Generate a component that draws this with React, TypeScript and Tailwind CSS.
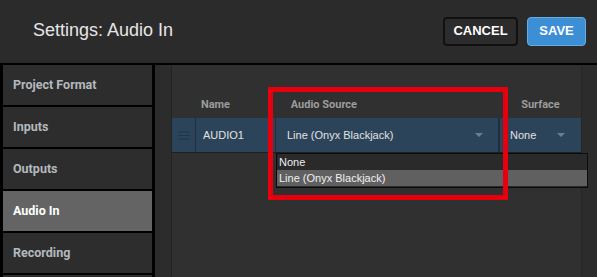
import React from 'react';

const navItems = ['Project Format', 'Inputs', 'Outputs', 'Audio In', 'Recording', ''];

export default function App() {
  return (
    <div className="relative w-[597px] h-[277px] overflow-hidden bg-black font-['Roboto',sans-serif]">
      {/* header */}
      <div className="h-[63px] bg-[#2b2b2b] flex items-center justify-between pl-[33px] pr-[11px]">
        <h1 className="text-[18px] text-[#e6e6e6] font-['Liberation_Sans',Arial,sans-serif] mt-[-2px]">
          Settings: Audio In
        </h1>
        <div className="flex gap-[9px] mt-[-1px]">
          <button className="w-[75px] h-[29px] rounded-[4px] border-2 border-[#111] bg-[#2c2c2c] text-white text-[13px] font-bold font-['Liberation_Sans',Arial,sans-serif]">
            CANCEL
          </button>
          <button className="w-[59px] h-[29px] rounded-[4px] border border-[#64aee6] bg-[#3d8fd5] text-white text-[13px] font-bold font-['Liberation_Sans',Arial,sans-serif]">
            SAVE
          </button>
        </div>
      </div>

      <div className="flex mt-[2px] h-[212px]">
        {/* sidebar */}
        <div className="w-[155px] pl-[3px] flex flex-col gap-[2px] bg-black">
          {navItems.map((item, idx) => (
            <div
              key={idx}
              className={
                item === 'Audio In'
                  ? 'w-[149px] h-[40px] shrink-0 flex items-center pl-[10px] pt-[1px] bg-[#646464] text-white text-[12.5px] font-bold'
                  : 'w-[149px] h-[40px] shrink-0 flex items-center pl-[10px] pt-[1px] bg-[#2d2d2d] text-[#b4b9bf] text-[12.5px] font-bold'
              }
            >
              {item}
            </div>
          ))}
        </div>

        {/* content */}
        <div className="flex-1 flex bg-[#2c2c2c]">
          <div className="w-[17px] border-r border-[#232323]" />
          <div className="w-[410px] bg-[#303030] border-r border-[#262626] flex flex-col">
            <div className="h-[53px] flex items-end pb-[5px] text-[11px] font-bold text-[#9c9c9c]">
              <div className="w-[24px]" />
              <div className="w-[80px] pl-[5px]">Name</div>
              <div className="w-[226px] pl-[15px]">Audio Source</div>
              <div className="w-[80px] pl-[20px]">Surface</div>
            </div>
            <div className="h-[35px] flex bg-[#2c4459] text-[11px] text-[#e2e2e2] font-['Liberation_Sans',Arial,sans-serif] border-b border-[#1f1f1f]">
              <div className="w-[24px] border-r border-[#1d3042] flex items-center justify-center">
                <svg width="12" height="9" viewBox="0 0 12 9">
                  <path d="M0 1h12M0 4.5h12M0 8h12" stroke="#203547" strokeWidth="1" />
                </svg>
              </div>
              <div className="w-[80px] border-r border-[#1d3042] flex items-center pl-[7px]">AUDIO1</div>
              <div className="w-[224px] border-r-2 border-[#1d3042] flex items-center justify-between pl-[11px] pr-[15px]">
                <span>Line (Onyx Blackjack)</span>
                <svg width="8" height="4" viewBox="0 0 8 4">
                  <path d="M0 0h8L4 4z" fill="#6c7f90" />
                </svg>
              </div>
              <div className="w-[80px] flex items-center justify-between pl-[10px] pr-[15px]">
                <span>None</span>
                <svg width="8" height="4" viewBox="0 0 8 4">
                  <path d="M0 0h8L4 4z" fill="#6c7f90" />
                </svg>
              </div>
            </div>
          </div>
          <div className="flex-1" />
        </div>
      </div>

      {/* open dropdown list */}
      <div className="absolute left-[276px] top-[153px] w-[312px] h-[35px] bg-[#2a2a2a] border border-[#0c0c0c] text-[11px] text-[#f0f0f0] font-['Liberation_Sans',Arial,sans-serif] flex flex-col">
        <div className="h-[16px] flex items-center pl-[2px]">None</div>
        <div className="h-[16px] flex items-center pl-[2px] bg-[#606060]">Line (Onyx Blackjack)</div>
      </div>

      {/* highlight annotation */}
      <div className="absolute left-[268px] top-[87px] w-[240px] h-[113px] border-[5px] border-[#e6000e]" />
    </div>
  );
}
